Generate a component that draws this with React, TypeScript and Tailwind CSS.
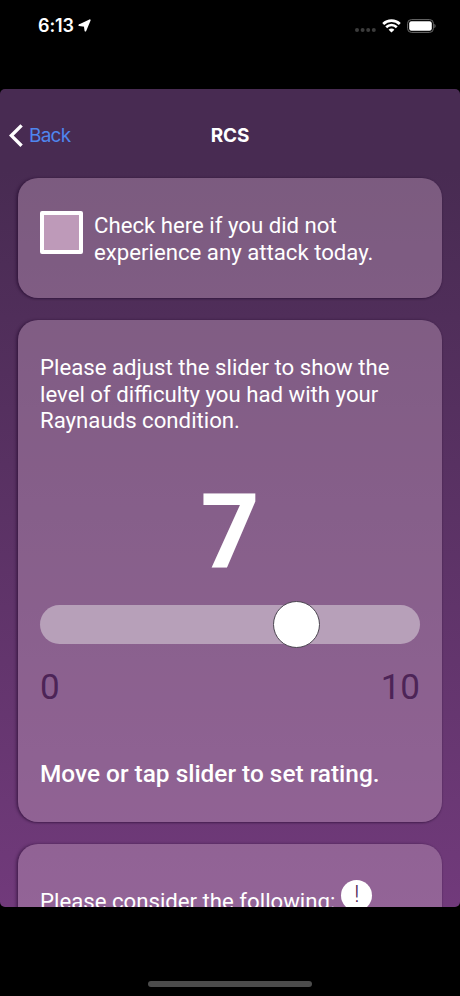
import React, { useState } from 'react';

const MAX_RATING = 10;

function StatusBar() {
  return (
    <div className="flex h-[89px] shrink-0 items-start justify-between pl-[38px] pr-[24px] pt-[14px] text-white">
      <div className="flex h-6 items-center gap-[4px]">
        <span className="font-['Inter'] text-[18px] font-semibold leading-6 tracking-[-0.1px]">6:13</span>
        <svg className="-mt-px h-[13px] w-[13px]" viewBox="0 0 13 13" fill="currentColor" aria-hidden="true">
          <path
            d="M11.8 1.2 7.4 11.6 6.7 6.9 1.2 6.2Z"
            stroke="currentColor"
            strokeWidth="1.7"
            strokeLinejoin="round"
          />
        </svg>
      </div>
      <div className="flex h-6 items-center">
        <svg className="mt-[8px] h-1 w-[21px] text-[#3c3c3c]" viewBox="0 0 21 4" fill="currentColor" aria-hidden="true">
          <circle cx="2" cy="2" r="2" />
          <circle cx="7.6" cy="2" r="2" />
          <circle cx="13.2" cy="2" r="2" />
          <circle cx="18.8" cy="2" r="2" />
        </svg>
        <svg className="ml-[6px] h-[14px] w-[19px]" viewBox="0 0 19 14" fill="none" aria-hidden="true">
          <path d="M1.2 4.9a12 12 0 0 1 16.6 0" stroke="currentColor" strokeWidth="2.8" />
          <path d="M4.2 8.2a7.6 7.6 0 0 1 10.6 0" stroke="currentColor" strokeWidth="2.6" />
          <path d="M9.5 13.5 6.6 10.7a4 4 0 0 1 5.8 0Z" fill="currentColor" />
        </svg>
        <svg className="ml-[6px] h-[14px] w-[29px]" viewBox="0 0 29 14" fill="none" aria-hidden="true">
          <rect x=".6" y=".6" width="25.8" height="12.8" rx="3.8" stroke="#6b6b6b" />
          <rect x="2.2" y="2.2" width="22.6" height="9.6" rx="2.2" fill="currentColor" />
          <path d="M27.4 4.8c1.6.7 1.6 3.7 0 4.4Z" fill="#6b6b6b" />
        </svg>
      </div>
    </div>
  );
}

function Header() {
  return (
    <header className="grid h-[89px] shrink-0 grid-cols-3 items-center px-[9px] pt-[4px]">
      <button type="button" className="flex items-center gap-[6px] text-[#4f86ee]">
        <svg className="h-6 w-[14px] text-white" viewBox="0 0 14 24" fill="none" aria-hidden="true">
          <path d="M12.6 1.4 2.4 11.6l10.2 10.2" stroke="currentColor" strokeWidth="3.4" />
        </svg>
        <span className="font-['Inter'] text-[19px] leading-6 tracking-[-0.75px]">Back</span>
      </button>
      <h1 className="text-center font-['Inter'] text-[19px] font-bold leading-6 tracking-[-0.1px] text-white">RCS</h1>
    </header>
  );
}

function Card({ className, children }: { className: string; children: React.ReactNode }) {
  return (
    <section
      className={`shrink-0 rounded-[20px] bg-[rgba(192,156,187,0.43)] px-[22px] shadow-[-2px_0px_3px_rgba(30,5,40,0.4),0_1px_2px_rgba(30,5,40,0.35)] ${className}`}
    >
      {children}
    </section>
  );
}

export default function App() {
  const [noAttack, setNoAttack] = useState(false);
  const [rating, setRating] = useState(7);

  return (
    <div className="flex h-[996px] w-[460px] flex-col overflow-hidden bg-black font-['Roboto',sans-serif] text-[22.2px] leading-[26.7px] text-white">
      <StatusBar />

      <main className="flex h-[818px] shrink-0 flex-col overflow-hidden rounded-[5px] bg-linear-to-b from-[#482b52] from-10% to-[#713a7b]">
        <Header />
        <div className="flex flex-col gap-[22px] px-[18px]">
          <Card className="flex h-[120px] items-start gap-[11px] pt-[33px]">
            <button
              type="button"
              role="checkbox"
              aria-checked={noAttack}
              aria-label="No attack today"
              onClick={() => setNoAttack(!noAttack)}
              className="flex h-[43px] w-[43px] shrink-0 items-center justify-center rounded-[2px] border-4 border-white bg-[#be9ab9]"
            >
              {noAttack && '✓'}
            </button>
            <p className="pt-px">
              Check here if you did not
              <br />
              experience any attack today.
            </p>
          </Card>

          <Card className="flex h-[502px] flex-col pt-[34px]">
            <p>
              Please adjust the slider to show the
              <br />
              level of difficulty you had with your
              <br />
              Raynauds condition.
            </p>
            <div className="mt-[39px] text-center text-[103px] font-bold leading-[120px]">{rating}</div>
            <div className="relative mt-[12px] h-[39px] rounded-full bg-[#b7a0b9]">
              <div
                className="absolute -top-[4px] h-[47px] w-[47px] rounded-full border border-[#4b4550] bg-white"
                style={{ left: `${(rating / MAX_RATING) * (380 - 47)}px` }}
              />
              <input
                type="range"
                min={0}
                max={MAX_RATING}
                value={rating}
                aria-label="Rating"
                onChange={(e) => setRating(Number(e.target.value))}
                className="absolute inset-0 w-full opacity-0"
              />
            </div>
            <div className="mt-[23px] flex justify-between text-[35px] leading-[42px] text-[#4d2457]">
              <span>0</span>
              <span>{MAX_RATING}</span>
            </div>
            <p className="mt-[52px] text-[24.4px] font-medium">Move or tap slider to set rating.</p>
          </Card>

          <Card className="flex h-[200px] items-start gap-[6px] pt-[36px]">
            <p className="pt-[8px]">Please consider the following:</p>
            <span className="flex h-[31px] w-[31px] items-center justify-center rounded-full bg-white text-[23px] font-light text-[#4d2457]">
              !
            </span>
          </Card>
        </div>
      </main>

      <div className="flex flex-1 items-end justify-center pb-[9px]">
        <div className="h-[6px] w-[164px] rounded-full bg-[#4c4c4c]" />
      </div>
    </div>
  );
}
